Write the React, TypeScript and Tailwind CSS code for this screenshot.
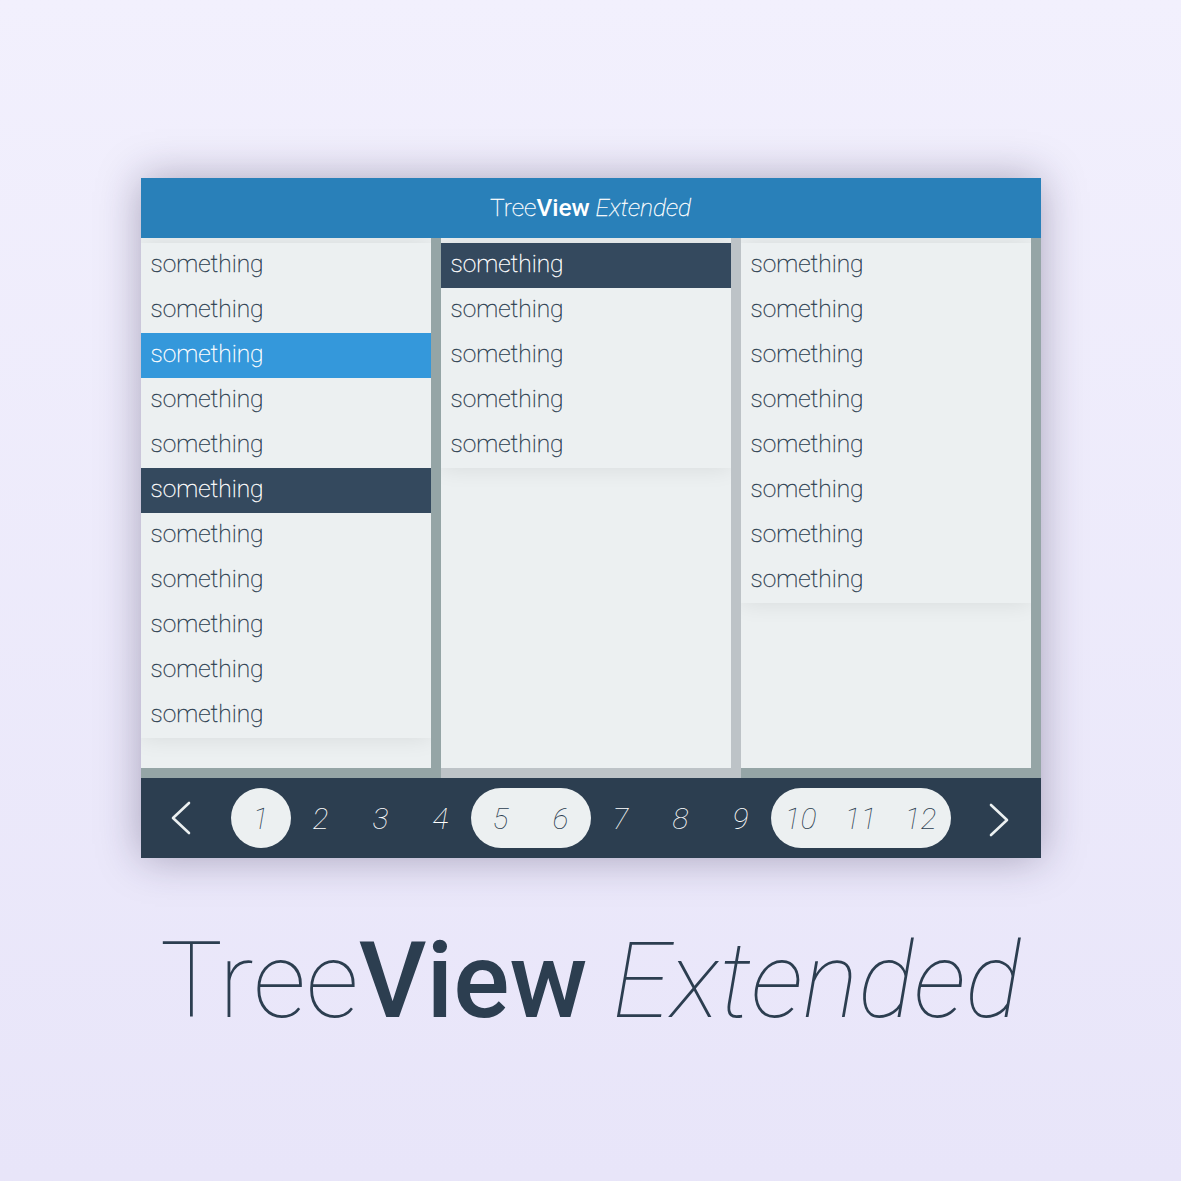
import { Fragment } from 'react';

type Row = { label: string; tone?: 'blue' | 'dark' };

const columns: { rows: Row[]; edge: string }[] = [
  {
    edge: 'bg-[#95a5a6]',
    rows: [
      { label: 'something' },
      { label: 'something' },
      { label: 'something', tone: 'blue' },
      { label: 'something' },
      { label: 'something' },
      { label: 'something', tone: 'dark' },
      { label: 'something' },
      { label: 'something' },
      { label: 'something' },
      { label: 'something' },
      { label: 'something' },
    ],
  },
  {
    edge: 'bg-[#bdc3c7]',
    rows: [
      { label: 'something', tone: 'dark' },
      { label: 'something' },
      { label: 'something' },
      { label: 'something' },
      { label: 'something' },
    ],
  },
  {
    edge: 'bg-[#95a5a6]',
    rows: Array.from({ length: 8 }, () => ({ label: 'something' })),
  },
];

// groups of pages; a group with more than one page (or the current page) sits in a pill
const pageGroups: { pages: number[]; pill: boolean }[] = [
  { pages: [1], pill: true },
  { pages: [2], pill: false },
  { pages: [3], pill: false },
  { pages: [4], pill: false },
  { pages: [5, 6], pill: true },
  { pages: [7], pill: false },
  { pages: [8], pill: false },
  { pages: [9], pill: false },
  { pages: [10, 11, 12], pill: true },
];

const font = { fontFamily: 'Roboto, "Noto Sans", sans-serif' };

function Chevron({ dir }: { dir: 'left' | 'right' }) {
  return (
    <svg width="20" height="34" viewBox="0 0 20 34" fill="none">
      <polyline
        points={dir === 'left' ? '18,2 2,17 18,32' : '2,2 18,17 2,32'}
        stroke="#ecf0f1"
        strokeWidth="2.6"
        strokeLinecap="round"
        strokeLinejoin="round"
      />
    </svg>
  );
}

function Column({ rows, edge }: { rows: Row[]; edge: string }) {
  return (
    <div className={`w-[300px] h-full pr-[10px] pb-[10px] ${edge}`}>
      <div className="h-full bg-[#ecf0f1] pt-[5px] overflow-hidden">
        <ul className="bg-[#ecf0f1] shadow-[0_0_22px_rgba(0,0,0,0.09)]">
          {rows.map((row, i) => (
            <li
              key={i}
              className={`h-[45px] flex items-center pl-[10px] pb-[3px] text-[24.5px] font-thin [-webkit-text-stroke:0.35px_currentColor] ${
                row.tone === 'blue'
                  ? 'bg-[#3498db] text-[#ffffff]'
                  : row.tone === 'dark'
                  ? 'bg-[#34495e] text-[#ffffff]'
                  : 'text-[#2c3e50]'
              }`}
            >
              {row.label}
            </li>
          ))}
        </ul>
      </div>
    </div>
  );
}

export default function App() {
  return (
    <div
      className="min-h-[1181px] flex flex-col items-center pt-[178px] bg-gradient-to-b from-[#f2f0fd] to-[#e8e5f9]"
      style={font}
    >
      <div className="w-[900px] shadow-[0_0_40px_rgba(40,30,70,0.35)]">
        <header className="h-[60px] bg-[#2980b9] flex items-center justify-center text-[24.5px] text-[#ffffff]">
          <span className="font-thin [-webkit-text-stroke:0.3px_currentColor]">Tree</span>
          <span className="font-medium">View</span>
          <span className="font-thin italic [-webkit-text-stroke:0.3px_currentColor]">&nbsp;Extended</span>
        </header>

        <div className="h-[540px] flex">
          {columns.map((col, i) => (
            <Column key={i} rows={col.rows} edge={col.edge} />
          ))}
        </div>

        <footer className="h-[80px] bg-[#2c3e50] flex items-center">
          <div className="w-[90px] flex justify-center pr-[10px]">
            <Chevron dir="left" />
          </div>
          <div className="flex">
            {pageGroups.map((g, i) => (
              <div
                key={i}
                className={`h-[60px] flex rounded-full ${g.pill ? 'bg-[#ecf0f1] text-[#2c3e50]' : 'text-[#ffffff]'}`}
              >
                {g.pages.map((p) => (
                  <Fragment key={p}>
                    <span className="w-[60px] flex items-center justify-center text-[30px] font-thin italic">
                      {p}
                    </span>
                  </Fragment>
                ))}
              </div>
            ))}
          </div>
          <div className="w-[90px] flex justify-center pl-[6px] pt-[4px]">
            <Chevron dir="right" />
          </div>
        </footer>
      </div>

      <h1 className="mt-[71px] text-[105px] leading-none text-[#2c3e50] whitespace-nowrap">
        <span className="font-thin">Tree</span>
        <span className="font-medium">View</span>
        <span className="font-thin italic"> Extended</span>
      </h1>
    </div>
  );
}
